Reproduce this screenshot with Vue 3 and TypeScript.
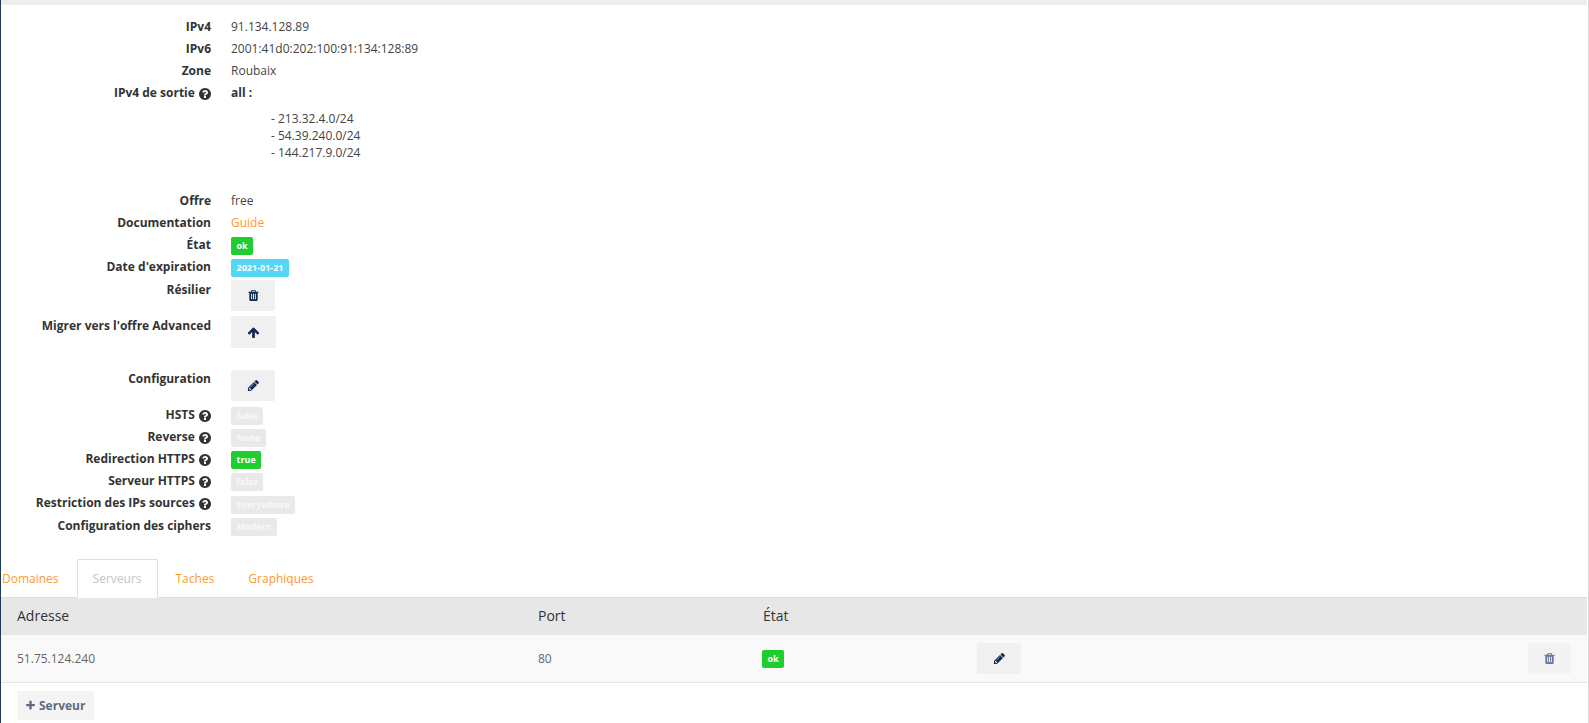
<script setup lang="ts">
const ICONS = {
  trash: 'M704 1376v-704q0-14-9-23t-23-9h-64q-14 0-23 9t-9 23v704q0 14 9 23t23 9h64q14 0 23-9t9-23zm256 0v-704q0-14-9-23t-23-9h-64q-14 0-23 9t-9 23v704q0 14 9 23t23 9h64q14 0 23-9t9-23zm256 0v-704q0-14-9-23t-23-9h-64q-14 0-23 9t-9 23v704q0 14 9 23t23 9h64q14 0 23-9t9-23zm-544-992h448l-48-117q-7-9-17-11h-317q-10 2-17 11zm928 32v64q0 14-9 23t-23 9h-96v948q0 83-47 143.5t-113 60.5h-832q-66 0-113-58.5t-47-141.5v-952h-96q-14 0-23-9t-9-23v-64q0-14 9-23t23-9h309l70-167q15-37 54-63t79-26h320q40 0 79 26t54 63l70 167h309q14 0 23 9t9 23z',
  up: 'M1675 971q0 51-37 90l-75 75q-38 38-91 38-54 0-90-38l-294-293v704q0 52-37.5 84.5t-90.5 32.5h-128q-53 0-90.5-32.5t-37.5-84.5v-704l-294 293q-36 38-90 38t-90-38l-75-75q-38-38-38-90 0-53 38-91l651-651q35-37 90-37 54 0 91 37l651 651q37 39 37 91z',
  pencil: 'M491 1536l91-91-235-235-91 91v107h128v128h107zm523-928q0-22-22-22-10 0-17 7l-542 542q-7 7-7 17 0 22 22 22 10 0 17-7l542-542q7-7 7-17zm-54-192l416 416-832 832h-416v-416zm683 96q0 53-37 90l-166 166-416-416 166-165q36-38 90-38 53 0 91 38l235 234q37 39 37 91z',
  plus: 'M1600 736v192q0 40-28 68t-68 28h-416v416q0 40-28 68t-68 28h-192q-40 0-68-28t-28-68v-416h-416q-40 0-68-28t-28-68v-192q0-40 28-68t68-28h416v-416q0-40 28-68t68-28h192q40 0 68 28t28 68v416h416q40 0 68 28t28 68z',
  help: 'M1024 1376v-192q0-14-9-23t-23-9h-192q-14 0-23 9t-9 23v192q0 14 9 23t23 9h192q14 0 23-9t9-23zm256-672q0-88-55.5-163t-138.5-116-170-41q-243 0-371 213-15 24 8 42l132 100q7 6 19 6 16 0 25-12 53-68 86-92 34-24 86-24 48 0 85.5 26t37.5 59q0 38-20 61t-68 45q-63 28-115.5 86.5t-52.5 125.5v36q0 14 9 23t23 9h192q14 0 23-9t9-23q0-19 21.5-49.5t54.5-49.5q32-18 49-28.5t46-35 44.5-48 28-60.5 12.5-81zm384 192q0 209-103 385.5t-279.5 279.5-385.5 103-385.5-103-279.5-279.5-103-385.5 103-385.5 279.5-279.5 385.5-103 385.5 103 279.5 279.5 103 385.5z',
}

const identity = [
  { label: 'IPv4', value: '91.134.128.89' },
  { label: 'IPv6', value: '2001:41d0:202:100:91:134:128:89' },
  { label: 'Zone', value: 'Roubaix' },
]
const outgoing = ['- 213.32.4.0/24', '- 54.39.240.0/24', '- 144.217.9.0/24']
const settings = [
  { label: 'HSTS', help: true, badge: 'false', tone: 'muted', low: false },
  { label: 'Reverse', help: true, badge: 'None', tone: 'muted', low: false },
  { label: 'Redirection HTTPS', help: true, badge: 'true', tone: 'ok', low: false },
  { label: 'Serveur HTTPS', help: true, badge: 'false', tone: 'muted', low: false },
  { label: 'Restriction des IPs sources', help: true, badge: 'Everywhere', tone: 'muted', low: true },
  { label: 'Configuration des ciphers', help: false, badge: 'Modern', tone: 'muted', low: true },
]
const tabs = ['Domaines', 'Serveurs', 'Taches', 'Graphiques']
</script>

<template>
  <div class="page">
    <span class="marker"></span>
    <div class="topbar"></div>

    <dl class="details">
      <div v-for="row in identity" :key="row.label" class="row">
        <dt>{{ row.label }}</dt>
        <dd>{{ row.value }}</dd>
      </div>
      <div class="row">
        <dt>IPv4 de sortie <svg class="help" viewBox="128 128 1536 1536"><path :d="ICONS.help" /></svg></dt>
        <dd><strong>all :</strong></dd>
      </div>
      <ul class="ranges">
        <li v-for="range in outgoing" :key="range">{{ range }}</li>
      </ul>

      <div class="row">
        <dt>Offre</dt>
        <dd>free</dd>
      </div>
      <div class="row">
        <dt>Documentation</dt>
        <dd><a class="link">Guide</a></dd>
      </div>
      <div class="row">
        <dt>État</dt>
        <dd class="badge-cell"><span class="badge ok">ok</span></dd>
      </div>
      <div class="row">
        <dt>Date d'expiration</dt>
        <dd class="badge-cell"><span class="badge info">2021-01-21</span></dd>
      </div>
      <div class="row row-cancel">
        <dt>Résilier</dt>
        <dd><button class="btn"><svg viewBox="0 0 1792 1792"><path :d="ICONS.trash" /></svg></button></dd>
      </div>
      <div class="row row-migrate">
        <dt>Migrer vers l'offre Advanced</dt>
        <dd><button class="btn btn-tall"><svg viewBox="0 0 1792 1792"><path :d="ICONS.up" /></svg></button></dd>
      </div>
      <div class="row row-config">
        <dt>Configuration</dt>
        <dd><button class="btn"><svg viewBox="0 0 1792 1792"><path :d="ICONS.pencil" /></svg></button></dd>
      </div>
      <div v-for="row in settings" :key="row.label" class="row" :class="{ low: row.low }">
        <dt>
          {{ row.label }}
          <svg v-if="row.help" class="help" viewBox="128 128 1536 1536"><path :d="ICONS.help" /></svg>
        </dt>
        <dd class="setting-cell"><span class="badge" :class="row.tone">{{ row.badge }}</span></dd>
      </div>
    </dl>

    <nav class="tabs">
      <a v-for="tab in tabs" :key="tab" class="tab" :class="{ active: tab === 'Serveurs' }">{{ tab }}</a>
    </nav>

    <div class="table">
      <div class="thead grid">
        <span class="first">Adresse</span>
        <span>Port</span>
        <span>État</span>
      </div>
      <div class="tbody grid">
        <span class="first">51.75.124.240</span>
        <span>80</span>
        <span class="state"><span class="badge ok">ok</span></span>
        <button class="btn"><svg viewBox="0 0 1792 1792"><path :d="ICONS.pencil" /></svg></button>
        <button class="btn btn-faded"><svg viewBox="0 0 1792 1792"><path :d="ICONS.trash" /></svg></button>
      </div>
    </div>

    <div class="actions">
      <button class="add"><svg viewBox="0 0 1792 1792"><path :d="ICONS.plus" /></svg> Serveur</button>
    </div>
  </div>
</template>

<style>
html, body { margin: 0; overflow: hidden; background: #fff; }
</style>

<style scoped>
.page {
  position: relative;
  box-sizing: border-box;
  width: 1589px;
  height: 723px;
  overflow: hidden;
  padding-right: 1px;
  border-left: 1px solid #1f3a5f;
  border-right: 1px solid #dcdcdc;
  font: 12px/22px "Open Sans", "Liberation Sans", sans-serif;
  color: #444;
}
.marker {
  position: absolute;
  left: -1px;
  top: 211px;
  width: 1px;
  height: 36px;
  background: #ffa100;
}
.topbar { height: 5px; background: #eeeeee; }

.details { margin: 11px 0 0; padding: 0; }
.row {
  display: grid;
  grid-template-columns: 210px 1fr;
  column-gap: 20px;
  height: 22px;
}
dt { text-align: right; font-weight: 700; color: #333; white-space: nowrap; }
dd { margin: 0; }
dd strong { color: #333; }
.help { width: 12px; height: 12px; margin-left: 1px; vertical-align: -3px; fill: #333; }

.ranges {
  list-style: none;
  margin: 6px 0 29px 270px;
  padding: 0;
  line-height: 17px;
}
.link { color: #ff9a2e; }

.badge-cell { padding-top: 3px; }
.setting-cell { padding-top: 3px; }
.low .setting-cell { padding-top: 4px; }
.low:last-child dt { padding-top: 1px; }
.badge {
  display: inline-block;
  height: 18px;
  padding: 0 5.5px;
  border-radius: 2px;
  font-size: 9px;
  font-weight: 700;
  line-height: 18px;
  color: #fff;
  vertical-align: top;
}
.ok { background: #1ecd2e; }
.info { background: #55d6f5; }
.muted { background: #e9e9e9; color: #f8f8f8; }

.btn {
  display: flex;
  align-items: center;
  justify-content: center;
  width: 44px;
  height: 31px;
  padding: 0;
  border: 0;
  border-radius: 2px;
  background: #f0f0f0;
}
.btn svg { width: 13px; height: 13px; fill: #122b54; }
.btn-tall { width: 45px; height: 32px; }
.btn-faded { width: 43px; background: #f3f3f3; }
.btn-faded svg { fill: #64779a; }
.row-cancel { height: 37px; }
.row-cancel dt { padding-top: 1px; }
.row-cancel dd { padding-top: 2px; }
.row-migrate { height: 52px; }
.row-migrate dd { padding-top: 1px; }
.row-config { height: 37px; }
.row-config dt { padding-top: 1px; }
.row-config dd { padding-top: 3px; }

.tabs {
  display: flex;
  height: 39px;
  margin-top: 23px;
  box-sizing: border-box;
  border-bottom: 1px solid #dddddd;
}
.tab {
  box-sizing: border-box;
  height: 39px;
  margin-right: 2px;
  padding: 0 16px;
  line-height: 40px;
  color: #ff9a2e;
}
.tab:first-child { padding-left: 1px; }
.tab.active {
  padding: 0 15px;
  border: 1px solid #dddddd;
  border-bottom-color: #fff;
  border-radius: 2px 2px 0 0;
  background: #fff;
  color: #c4c4c4;
  line-height: 38px;
}

.grid {
  display: grid;
  align-items: center;
}
.first { padding-left: 16px; }
.thead {
  grid-template-columns: 537px 225px 214px 1fr;
  box-sizing: border-box;
  height: 37px;
  padding-bottom: 2px;
  background: #e7e7e7;
  font-size: 14px;
  color: #333;
}
.tbody {
  grid-template-columns: 537px 225px 214px 44px 1fr;
  box-sizing: border-box;
  height: 48px;
  background: #f9f9f9;
  border-bottom: 1px solid #e4e4e4;
  color: #666;
}
.tbody .btn { margin-top: -1px; }
.tbody .btn-faded { justify-self: end; margin-right: 16px; }
.state { margin-left: -1px; display: flex; }

.actions { padding: 8px 0 0 16px; }
.add {
  display: flex;
  align-items: center;
  gap: 3px;
  height: 29px;
  width: 77px;
  padding: 0 0 0 8px;
  border: 0;
  border-radius: 2px;
  background: #f4f4f4;
  font: 700 12px "Open Sans", "Liberation Sans", sans-serif;
  color: #5e6b7f;
}
.add svg { width: 11px; height: 11px; fill: #5e6b7f; }
</style>
